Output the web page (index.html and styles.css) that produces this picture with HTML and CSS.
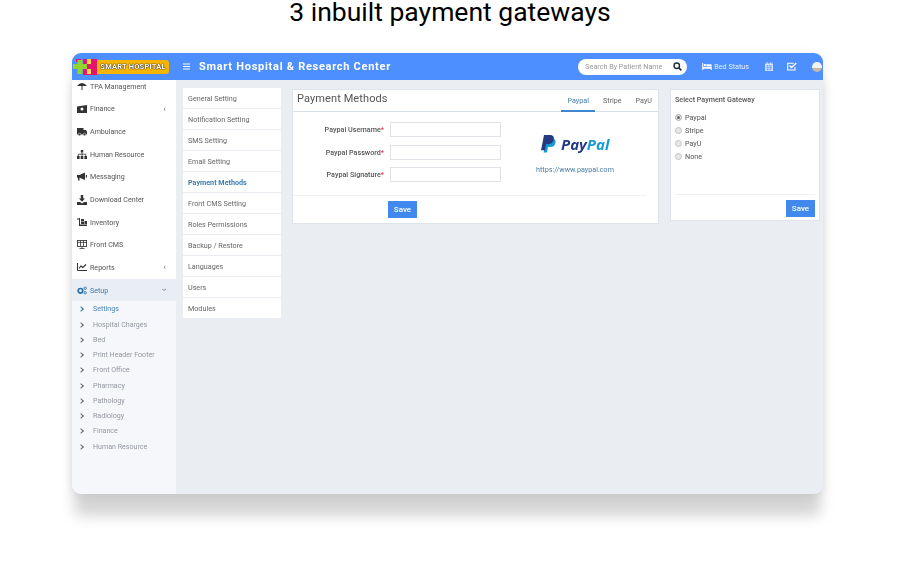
FILE: index.html
```html
<!DOCTYPE html>
<html lang="en">
<head>
  <meta charset="UTF-8" />
  <title>3 inbuilt payment gateways</title>
  <link rel="stylesheet" href="styles.css">
</head>
<body>
  <h1 class="page-title">3 inbuilt payment gateways</h1>

  <div class="window">
    <header class="topbar">
      <div class="logo">
        <svg class="logo-mark" width="24" height="16" viewBox="0 0 24 16">
          <rect x="10" y="0" width="14" height="16" fill="#e5146f"/>
          <rect x="3" y="0" width="5" height="3" fill="#e5146f"/>
          <rect x="0" y="5" width="14" height="5" fill="#8fd42f"/>
          <rect x="4.500" y="1" width="5" height="14" fill="#8fd42f"/>
          <rect x="14" y="0" width="4" height="5" fill="#f7d94a"/>
          <rect x="14" y="10" width="4" height="5" fill="#f7d94a"/>
        </svg>
        <span class="logo-text">SMART HOSPITAL</span>
      </div>
      <svg class="burger" width="7" height="7" viewBox="0 0 7 7"><path d="M0 1h7M0 3.500h7M0 6h7" stroke="#fff" stroke-width="1.100"/></svg>
      <div class="brand">Smart Hospital &amp; Research Center</div>
      <div class="search">
        <span>Search By Patient Name</span>
        <svg width="9" height="9" viewBox="0 0 10 10"><circle cx="4.200" cy="4.200" r="3" fill="none" stroke="#1f2d3d" stroke-width="1.600"/><path d="M6.500 6.500 9.300 9.300" stroke="#1f2d3d" stroke-width="1.800"/></svg>
      </div>
      <div class="bed">
        <svg width="10" height="7" viewBox="0 0 11 8"><path d="M0 0h1.200v4.500H11V8H9.800V6.500H1.200V8H0zM2 1.200h2.200v2.500H2zM4.800 1.500h4.700Q11 1.500 11 3.200v.7H4.800z" fill="#fff"/></svg>
        Bed Status
      </div>
      <svg class="top-icon cal" width="8" height="9" viewBox="0 0 9 10"><path d="M0 1.500h9V10H0zM2 0h1v2H2zM6 0h1v2H6z" fill="#d5e4ff"/><path d="M1 4h7M1 6h7M1 8h7M3 3.500V9.500M6 3.500V9.500" stroke="#4d8fff" stroke-width=".6"/></svg>
      <svg class="top-icon check" width="10" height="9" viewBox="0 0 10 9"><path d="M8 5v3H.7V1.200h6" fill="none" stroke="#fff" stroke-width="1.100"/><path d="M2.500 3.500 4.500 5.500 9.300 1" fill="none" stroke="#fff" stroke-width="1.500"/></svg>
      <div class="avatar"></div>
    </header>

    <div class="body">
      <aside class="sidebar">
        <ul class="menu">
          <li><svg width="10" height="9" viewBox="0 0 10 9"><path d="M0 4Q5-2 10 4zM4.500 3h1v5H4.500z" fill="#333"/></svg>TPA Management</li>
          <li><svg width="10" height="8" viewBox="0 0 10 8"><path d="M0 1.500 10 0v8H0z" fill="#333"/><circle cx="5" cy="4" r="1.500" fill="#fff"/></svg>Finance<span class="caret">‹</span></li>
          <li><svg width="10" height="8" viewBox="0 0 10 8"><path d="M0 0h6.500v2H9l1 2v2.500H0z" fill="#333"/><circle cx="2.500" cy="6.500" r="1.300" fill="#333" stroke="#fff" stroke-width=".5"/><circle cx="7.500" cy="6.500" r="1.300" fill="#333" stroke="#fff" stroke-width=".5"/></svg>Ambulance</li>
          <li><svg width="10" height="9" viewBox="0 0 10 9"><path d="M3.800 0h2.400v2.500H3.800zM0 6h2.600v3H0zM3.700 6h2.600v3H3.700zM7.400 6H10v3H7.400z" fill="#333"/><path d="M5 2.500V6M1.300 6V4.200h7.400V6" fill="none" stroke="#333" stroke-width=".8"/></svg>Human Resource</li>
          <li><svg width="10" height="9" viewBox="0 0 10 9"><path d="M0 3h2.500L8 .500v7.500L2.500 5.800V8.500H1V5.800H0zM8.800 3H10v2.500H8.800z" fill="#333"/></svg>Messaging</li>
          <li><svg width="10" height="10" viewBox="0 0 10 10"><path d="M3.800 0h2.400v3.500H8L5 6.800 2 3.500h1.800zM0 7h3l2 1.500L7 7h3v3H0z" fill="#333"/></svg>Download Center</li>
          <li><svg width="10" height="9" viewBox="0 0 10 9"><path d="M2 0h1v6.500h8V8H2zM4 1h3v2.500H4zM7.500 3H10v3H7.500zM4 4h3v2H4z" fill="#333"/><path d="M0 1h2" stroke="#333"/></svg>Inventory</li>
          <li><svg width="10" height="9" viewBox="0 0 10 9"><rect x=".4" y=".4" width="9.200" height="6" fill="none" stroke="#333" stroke-width=".9"/><path d="M0 2.400h10M3.500 .5v5.500M6.500 .5v5.500M5 6.500V8M2.500 8.500h5" stroke="#333" stroke-width=".8"/></svg>Front CMS</li>
          <li><svg width="10" height="8" viewBox="0 0 10 8"><path d="M.5 0v7.500H10" fill="none" stroke="#333"/><path d="M2 5.500 4 3l1.800 1.500L9 1.500" fill="none" stroke="#333" stroke-width="1.200"/></svg>Reports<span class="caret">‹</span></li>
          <li class="active"><svg width="11" height="9" viewBox="0 0 11 9"><circle cx="3.800" cy="4.800" r="2.500" fill="none" stroke="#2d72a8" stroke-width="1.900"/><circle cx="9" cy="2" r="1.300" fill="none" stroke="#2d72a8"/><circle cx="9" cy="7" r="1.300" fill="none" stroke="#2d72a8"/></svg>Setup<span class="caret down">‹</span></li>
        </ul>
        <ul class="submenu">
          <li class="current">Settings</li>
          <li>Hospital Charges</li>
          <li>Bed</li>
          <li>Print Header Footer</li>
          <li>Front Office</li>
          <li>Pharmacy</li>
          <li>Pathology</li>
          <li>Radiology</li>
          <li>Finance</li>
          <li>Human Resource</li>
        </ul>
      </aside>

      <main class="content">
        <ul class="settings">
          <li>General Setting</li>
          <li>Notification Setting</li>
          <li>SMS Setting</li>
          <li>Email Setting</li>
          <li class="selected">Payment Methods</li>
          <li>Front CMS Setting</li>
          <li>Roles Permissions</li>
          <li>Backup / Restore</li>
          <li>Languages</li>
          <li>Users</li>
          <li>Modules</li>
        </ul>

        <section class="card methods">
          <div class="card-head">
            <h2>Payment Methods</h2>
            <nav class="tabs">
              <a class="tab on">Paypal</a>
              <a class="tab">Stripe</a>
              <a class="tab">PayU</a>
            </nav>
          </div>
          <div class="methods-body">
            <div class="fields">
              <label class="field"><span>Paypal Username<em>*</em></span><input type="text"></label>
              <label class="field"><span>Paypal Password<em>*</em></span><input type="text"></label>
              <label class="field"><span>Paypal Signature<em>*</em></span><input type="text"></label>
            </div>
            <div class="pp">
              <div class="pp-logo">
                <svg width="15" height="18" viewBox="0 0 15 18">
                  <path d="M5 3.500h6.500q3.500.5 3 4-.8 4.500-5 4.500H7L6 17.500H2.600z" fill="#169bd7"/>
                  <path d="M3 0h6q4.500.3 3.800 4.200Q12 9 7.500 9.200H5l-1 6H0z" fill="#253b80"/>
                </svg>
                <span class="pp-word"><b>Pay</b><i>Pal</i></span>
              </div>
              <a class="pp-link">https://www.paypal.com</a>
            </div>
          </div>
          <div class="card-foot"><button class="btn">Save</button></div>
        </section>

        <section class="card gateway">
          <h3>Select Payment Gateway</h3>
          <div class="radios">
            <label class="radio"><i class="dot checked"></i>Paypal</label>
            <label class="radio"><i class="dot"></i>Stripe</label>
            <label class="radio"><i class="dot"></i>PayU</label>
            <label class="radio"><i class="dot"></i>None</label>
          </div>
          <div class="gateway-foot"><button class="btn">Save</button></div>
        </section>
      </main>
    </div>
  </div>
</body>
</html>
```
FILE: styles.css
```css
* {
  margin: 0;
  padding: 0;
  box-sizing: border-box;
  font-family: Roboto, 'Liberation Sans', sans-serif;
}

body {
  background: #fff;
  height: 582px;
  overflow: hidden;
}

ul {
  list-style: none;
}

.page-title {
  height: 24px;
  margin-bottom: 29px;
  font-size: 26.500px;
  line-height: 24px;
  font-weight: 400;
  color: #000;
  text-align: center;
}

.window {
  width: 751px;
  height: 441px;
  margin-left: 72px;
  border-radius: 9px;
  background: #eaedf1;
  box-shadow: 0 24px 14px -2px rgba(0, 0, 0, 0.17), 0 2px 12px rgba(0, 0, 0, 0.08);
  overflow: hidden;
  display: flex;
  flex-direction: column;
  filter: blur(0.3px);
}

/* top bar */
.topbar {
  height: 27px;
  flex: none;
  background: #4d8fff;
  display: flex;
  align-items: center;
  position: relative;
  z-index: 2;
  color: #fff;
}

.logo {
  width: 104px;
  flex: none;
  display: flex;
  align-items: center;
  padding-left: 1px;
}

.logo-mark {
  flex: none;
}

.logo-text {
  width: 72px;
  height: 14px;
  flex: none;
  background: #f7b500;
  border-radius: 0 3px 3px 0;
  font-size: 7.500px;
  line-height: 14px;
  font-weight: 700;
  letter-spacing: 0.2px;
  text-align: center;
  color: #fff;
  text-shadow: 0 0 1px #222, 0 0 1px #222, 0 0 1px #222;
  white-space: nowrap;
}

.burger {
  margin-left: 7px;
  flex: none;
}

.brand {
  margin-left: 9px;
  font-size: 11px;
  font-weight: 700;
  letter-spacing: 0.72px;
  white-space: nowrap;
}

.search {
  margin-left: auto;
  width: 109px;
  height: 16px;
  border-radius: 8px;
  background: #fff;
  display: flex;
  align-items: center;
  justify-content: space-between;
  padding: 0 5px 0 7px;
  font-size: 7.200px;
  color: #999;
  white-space: nowrap;
}

.bed {
  margin-left: 15px;
  display: flex;
  align-items: center;
  gap: 2px;
  font-size: 7.200px;
  color: #e6eeff;
  white-space: nowrap;
}

.cal {
  margin-left: 16px;
}

.check {
  margin-left: 14px;
}

.avatar {
  width: 10px;
  height: 10px;
  margin: 0 1px 0 15px;
  border-radius: 50%;
  background: linear-gradient(#f2f2f2 55%, #c9b8a6 55%);
}

/* layout */
.body {
  flex: 1;
  display: flex;
  min-height: 0;
}

/* sidebar */
.sidebar {
  width: 104px;
  flex: none;
  background: #f5f7fb;
  overflow: hidden;
}

.menu {
  margin-top: -5px;
  background: #fff;
}

.menu li {
  height: 22.650px;
  display: flex;
  align-items: center;
  gap: 3px;
  padding: 0 10px 0 5px;
  font-size: 7.100px;
  color: #555;
}

.menu svg {
  width: 10px;
  flex: none;
}

.menu li.active {
  background: #e9eef5;
  color: #3d7dae;
}

.caret {
  margin-left: auto;
  font-size: 9px;
  color: #777;
}

.caret.down {
  transform: rotate(-90deg);
}

.submenu li {
  height: 15.240px;
  line-height: 15.240px;
  padding-left: 21px;
  font-size: 7.100px;
  color: #94989f;
  position: relative;
}

.submenu li::before {
  content: "";
  position: absolute;
  left: 7px;
  top: 6px;
  width: 3px;
  height: 3px;
  border-top: 1px solid #666;
  border-right: 1px solid #666;
  transform: rotate(45deg);
}

.submenu li.current {
  color: #4b86b4;
}

.submenu li.current::before {
  border-color: #2d72a8;
}

/* content */
.content {
  flex: 1;
  display: flex;
  align-items: flex-start;
  padding: 8px 4px 0 7px;
}

.settings {
  width: 98px;
  flex: none;
  display: flex;
  flex-direction: column;
  gap: 1px;
}

.settings li {
  height: 20px;
  line-height: 21px;
  padding-left: 5px;
  background: #fff;
  font-size: 7.200px;
  color: #666;
}

.settings li.selected {
  font-weight: 700;
  color: #3d7dae;
}

.card {
  background: #fff;
  border: 1px solid #dfe4ec;
}

.methods {
  width: 367px;
  height: 135px;
  margin: 1px 0 0 11px;
  flex: none;
}

.card-head {
  height: 22px;
  display: flex;
  justify-content: space-between;
  border-bottom: 1px solid #d8e0ea;
  padding-left: 4px;
}

.card-head h2 {
  font-size: 11px;
  font-weight: 400;
  line-height: 17px;
  color: #555;
  letter-spacing: 0.1px;
}

.tabs {
  display: flex;
}

.tab {
  height: 22px;
  padding: 0 6px;
  margin-right: 2px;
  font-size: 7.200px;
  line-height: 21px;
  color: #666;
}

.tab:last-child {
  margin-right: 0;
}

.tab.on {
  color: #3d7dae;
  border-bottom: 2px solid #3f86cf;
}

.methods-body {
  height: 84px;
  display: flex;
  margin: 0 12px 0 0;
  border-bottom: 1px solid #f0f2f5;
}

.fields {
  width: 208px;
  padding-top: 10px;
  display: flex;
  flex-direction: column;
  gap: 7.500px;
}

.field {
  display: flex;
  align-items: center;
  justify-content: flex-end;
  gap: 6px;
  height: 15px;
  font-size: 7.200px;
  font-weight: 500;
  color: #555;
}

.field em {
  color: #e0344b;
  font-style: normal;
}

.field input {
  width: 111px;
  height: 15px;
  border: 1px solid #dfe3e8;
  background: #fff;
}

.pp {
  flex: 1;
  padding: 22px 0 0 35px;
}

.pp-logo {
  display: flex;
  align-items: center;
  gap: 5px;
  margin-left: 5px;
  height: 19px;
}

.pp-word {
  font-size: 15px;
  font-weight: 700;
  font-style: italic;
  white-space: nowrap;
}

.pp-word b {
  color: #253b80;
  font-family: 'Open Sans', sans-serif;
  font-weight: 700;
}

.pp-word i {
  color: #179bd7;
  font-family: 'Open Sans', sans-serif;
}

.pp-link {
  display: block;
  margin-top: 12px;
  font-size: 7.200px;
  color: #4a7fa8;
  white-space: nowrap;
}

.card-foot {
  display: flex;
  padding: 5px 0 0 95px;
}

.btn {
  width: 29px;
  height: 17px;
  border: none;
  background: #4189ee;
  color: #fff;
  font-size: 8px;
  font-weight: 500;
}

.gateway {
  width: 150px;
  height: 132px;
  margin: 1px 0 0 11px;
  flex: none;
  padding-left: 4px;
}

.gateway h3 {
  font-size: 7.200px;
  font-weight: 500;
  line-height: 19px;
  color: #555;
}

.radios {
  margin-top: 2px;
}

.radio {
  height: 13px;
  display: flex;
  align-items: center;
  gap: 3px;
  font-size: 7.200px;
  color: #555;
}

.dot {
  width: 7px;
  height: 7px;
  border-radius: 50%;
  border: 1px solid #c2c2c2;
  background: #e8e8e8;
}

.dot.checked {
  background: #666;
  box-shadow: inset 0 0 0 1px #eee;
}

.gateway-foot {
  margin: 31px 4px 0 0;
  padding-top: 5px;
  border-top: 1px solid #f0f2f5;
  display: flex;
  justify-content: flex-end;
}
```
